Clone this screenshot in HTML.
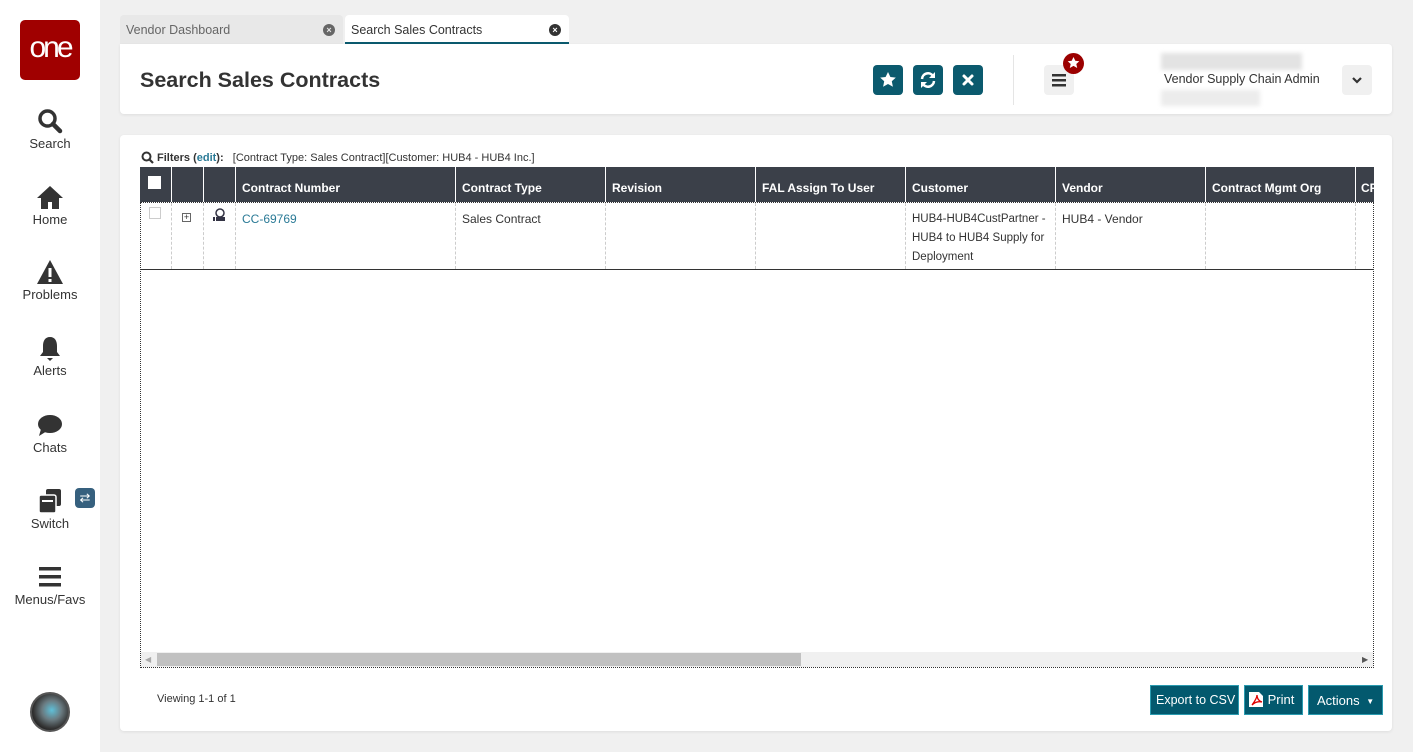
<!DOCTYPE html>
<html><head><meta charset="utf-8"><style>
*{box-sizing:border-box;margin:0;padding:0}
body{width:1413px;height:752px;background:#f0f0f0;font-family:"Liberation Sans",sans-serif;position:relative;overflow:hidden;color:#333}
.abs{position:absolute}
.side{left:0;top:0;width:100px;height:752px;background:#fff}
.nav{position:absolute;left:0;width:100px;text-align:center;font-size:13px;color:#333}
.nav svg{display:block;margin:0 auto 2px}
.tab{position:absolute;top:15px;height:29px;font-size:12.5px;padding:8px 6px 0;border-radius:4px 4px 0 0}
.card{background:#fff;border-radius:4px;box-shadow:0 1px 3px rgba(0,0,0,.08)}
.tb{position:absolute;top:65px;width:30px;height:30px;background:#0b5a6e;border-radius:4px}
.th{position:absolute;top:167px;height:35px;background:#3b4049;color:#fff;font-weight:bold;font-size:12px;padding:14px 6px 0;border-left:1px solid #fff;white-space:nowrap}
.td{position:absolute;top:203px;height:66px;border-left:1px dashed #ccc;font-size:12px;padding:7px 6px;line-height:19px}
.btn{position:absolute;top:685px;height:30px;background:#03596e;border:1px solid #2a9bb0;color:#fff;font-size:13px;padding:7px 6px 0;white-space:nowrap;overflow:hidden}
</style></head><body>
<div class="abs side"></div>
<div class="abs" style="left:20px;top:20px;width:60px;height:60px;background:#a00000;border-radius:5px;color:#fff;font-size:30px;text-align:center;line-height:56px;letter-spacing:-3px">one</div>
<div class="nav" style="top:108px"><svg width="26" height="26" viewBox="0 0 26 26"><circle cx="10.5" cy="10.5" r="7.5" fill="none" stroke="#333" stroke-width="3.5"/><path d="M16 16l7 7" stroke="#333" stroke-width="4.5" stroke-linecap="round"/></svg>Search</div>
<div class="nav" style="top:184px"><svg width="28" height="26" viewBox="0 0 28 26"><path d="M14 2L1 14h4v11h7v-7h4v7h7V14h4z" fill="#333"/></svg>Home</div>
<div class="nav" style="top:259px"><svg width="28" height="26" viewBox="0 0 28 26"><path d="M14 1L1 25h26z" fill="#333"/><rect x="12.5" y="9" width="3" height="9" fill="#fff"/><rect x="12.5" y="20" width="3" height="3" fill="#fff"/></svg>Problems</div>
<div class="nav" style="top:335px"><svg width="26" height="26" viewBox="0 0 26 26"><path d="M13 2c-5 0-7 4-7 9v6l-3 4h20l-3-4v-6c0-5-2-9-7-9z" fill="#333"/><path d="M10 23h6l-3 3z" fill="#333"/></svg>Alerts</div>
<div class="nav" style="top:412px"><svg width="28" height="26" viewBox="0 0 28 26"><ellipse cx="14" cy="12" rx="12" ry="9" fill="#333"/><path d="M5 17l-2 7 8-5z" fill="#333"/></svg>Chats</div>
<div class="nav" style="top:488px"><svg width="28" height="26" viewBox="0 0 28 26"><rect x="10" y="1" width="15" height="17" rx="2" fill="#333"/><rect x="3" y="7" width="17" height="18" rx="2" fill="#333" stroke="#fff" stroke-width="1.5"/><rect x="6" y="12" width="11" height="2" fill="#fff"/></svg>Switch</div>
<div class="abs" style="left:75px;top:488px;width:20px;height:20px;background:#36607e;border-radius:4px;color:#fff;font-size:13px;text-align:center;line-height:20px">⇄</div>
<div class="nav" style="top:564px"><svg width="26" height="26" viewBox="0 0 26 26"><rect x="2" y="3" width="22" height="3.5" fill="#333"/><rect x="2" y="11" width="22" height="3.5" fill="#333"/><rect x="2" y="19" width="22" height="3.5" fill="#333"/></svg>Menus/Favs</div>
<div class="abs" style="left:30px;top:692px;width:40px;height:40px;border-radius:50%;background:radial-gradient(circle at 55% 45%,#5fc0d8 0,#6a7a80 35%,#333 65%,#222 75%);border:2px solid #555"></div>

<div class="tab" style="left:120px;width:223px;background:#e8e8e8;color:#666">Vendor Dashboard<span style="position:absolute;right:8px;top:9px;width:12px;height:12px;border-radius:50%;background:#666;color:#e8e8e8;font-size:9px;line-height:12px;text-align:center;font-weight:bold">×</span></div>
<div class="tab" style="left:345px;width:224px;background:#fff;color:#333;border-bottom:2px solid #0b5a6e">Search Sales Contracts<span style="position:absolute;right:8px;top:9px;width:12px;height:12px;border-radius:50%;background:#333;color:#fff;font-size:9px;line-height:12px;text-align:center;font-weight:bold">×</span></div>

<div class="abs card" style="left:120px;top:44px;width:1272px;height:70px;border-radius:0 4px 4px 4px"></div>
<div class="abs" style="left:140px;top:68px;font-size:21.5px;font-weight:bold;color:#333">Search Sales Contracts</div>
<div class="tb" style="left:873px"><svg width="30" height="30" viewBox="0 0 30 30"><path d="M15 7l2.4 5 5.4.6-4 3.7 1.1 5.4L15 19l-4.9 2.7 1.1-5.4-4-3.7 5.4-.6z" fill="#fff"/></svg></div>
<div class="tb" style="left:913px"><svg width="30" height="30" viewBox="0 0 30 30"><path d="M9 14a6 6 0 0 1 11-3M21 16a6 6 0 0 1-11 3" fill="none" stroke="#fff" stroke-width="2.5"/><path d="M22 7v6h-6zM8 23v-6h6z" fill="#fff"/></svg></div>
<div class="tb" style="left:953px"><svg width="30" height="30" viewBox="0 0 30 30"><path d="M11 11l8 8M19 11l-8 8" stroke="#fff" stroke-width="3" stroke-linecap="round"/></svg></div>
<div class="abs" style="left:1013px;top:55px;width:1px;height:50px;background:#e5e5e5"></div>
<div class="abs" style="left:1044px;top:65px;width:30px;height:30px;background:#f0f0f0;border-radius:4px"><svg width="30" height="30"><rect x="8" y="9" width="14" height="2.5" fill="#333"/><rect x="8" y="14" width="14" height="2.5" fill="#333"/><rect x="8" y="19" width="14" height="2.5" fill="#333"/></svg></div>
<div class="abs" style="left:1063px;top:53px;width:21px;height:21px;background:#9b0000;border-radius:50%"><svg width="21" height="21"><path d="M10.5 4l1.8 3.8 4 .4-3 2.8.9 4-3.7-2.1-3.7 2.1.9-4-3-2.8 4-.4z" fill="#fff"/></svg></div>
<div class="abs" style="left:1161px;top:53px;width:141px;height:17px;background:#e3e3e3;filter:blur(2px)"></div>
<div class="abs" style="left:1164px;top:72px;font-size:12.5px;color:#333">Vendor Supply Chain Admin</div>
<div class="abs" style="left:1161px;top:90px;width:99px;height:16px;background:#ececec;filter:blur(2px)"></div>
<div class="abs" style="left:1342px;top:65px;width:30px;height:30px;background:#f0f0f0;border-radius:4px"><svg width="30" height="30"><path d="M11 13l4 4 4-4" fill="none" stroke="#333" stroke-width="2.2"/></svg></div>

<div class="abs card" style="left:120px;top:135px;width:1272px;height:596px"></div>
<div class="abs" style="left:141px;top:151px"><svg width="13" height="13"><circle cx="5.5" cy="5.5" r="4" fill="none" stroke="#333" stroke-width="2"/><path d="M8.5 8.5l3.5 3.5" stroke="#333" stroke-width="2.2"/></svg></div>
<div class="abs" style="left:157px;top:152px;font-size:11px;color:#333"><b>Filters (<span style="color:#2a7a96">edit</span>):</b>&nbsp;&nbsp; [Contract Type: Sales Contract][Customer: HUB4 - HUB4 Inc.]</div>

<div class="abs" style="left:140px;top:167px;width:1234px;height:501px;border:1px dotted #333"></div>
<div class="th" style="left:140px;width:31px;border-left:none"><span style="position:absolute;left:8px;top:9px;width:13px;height:13px;background:#fff"></span></div>
<div class="th" style="left:171px;width:32px"></div>
<div class="th" style="left:203px;width:32px"></div>
<div class="th" style="left:235px;width:220px">Contract Number</div>
<div class="th" style="left:455px;width:150px">Contract Type</div>
<div class="th" style="left:605px;width:150px">Revision</div>
<div class="th" style="left:755px;width:150px">FAL Assign To User</div>
<div class="th" style="left:905px;width:150px">Customer</div>
<div class="th" style="left:1055px;width:150px">Vendor</div>
<div class="th" style="left:1205px;width:150px">Contract Mgmt Org</div>
<div class="th" style="left:1355px;width:19px;overflow:hidden;padding-left:5px">CP</div>
<div class="abs" style="left:140px;top:202px;width:1234px;height:1px;border-top:1px dotted #333"></div>
<div class="td" style="left:140px;width:31px;border-left:none"><span style="position:absolute;left:9px;top:4px;width:12px;height:12px;border:1px solid #ccc"></span></div>
<div class="td" style="left:171px;width:32px"><span style="position:absolute;left:10px;top:10px;width:9px;height:9px;border:1px solid #666;font-size:9px;line-height:7px;text-align:center">+</span></div>
<div class="td" style="left:203px;width:32px"><svg style="position:absolute;left:8px;top:5px" width="14" height="14"><circle cx="8" cy="5" r="4" fill="#fff" stroke="#334" stroke-width="1.5"/><rect x="4" y="9" width="9" height="4" fill="#334"/><rect x="1" y="9" width="2" height="4" fill="#334"/></svg></div>
<div class="td" style="left:235px;width:220px;color:#2a7a96">CC-69769</div>
<div class="td" style="left:455px;width:150px">Sales Contract</div>
<div class="td" style="left:605px;width:150px"></div>
<div class="td" style="left:755px;width:150px"></div>
<div class="td" style="left:905px;width:150px;font-size:11.5px">HUB4-HUB4CustPartner - HUB4 to HUB4 Supply for Deployment</div>
<div class="td" style="left:1055px;width:150px">HUB4 - Vendor</div>
<div class="td" style="left:1205px;width:150px"></div>
<div class="td" style="left:1355px;width:18px"></div>
<div class="abs" style="left:141px;top:269px;width:1232px;height:1px;background:#333"></div>
<div class="abs" style="left:141px;top:652px;width:1232px;height:15px;background:#f0f0f0"></div>
<div class="abs" style="left:157px;top:653px;width:644px;height:13px;background:#c1c1c1"></div>
<div class="abs" style="left:145px;top:655px;font-size:8px;color:#aaa">◀</div>
<div class="abs" style="left:1362px;top:655px;font-size:8px;color:#555">▶</div>

<div class="abs" style="left:157px;top:693px;font-size:11px;color:#333">Viewing 1-1 of 1</div>
<div class="btn" style="left:1150px;width:89px;padding-left:5px;font-size:12.5px">Export to CSV</div>
<div class="btn" style="left:1244px;width:59px;padding:5px 0 0 3px"><svg style="vertical-align:-4px" width="16" height="17"><path d="M1 1h10l4 4v11H1z" fill="#fff"/><path d="M4 14c3-4 5-7 5-10 0 4 2 6 5 7-4-1-7 0-10 3z" fill="none" stroke="#d00" stroke-width="1.3"/></svg> Print</div>
<div class="btn" style="left:1308px;width:75px;padding-left:8px">Actions <span style="font-size:8px;margin-left:3px;vertical-align:1px">▼</span></div>
</body></html>
